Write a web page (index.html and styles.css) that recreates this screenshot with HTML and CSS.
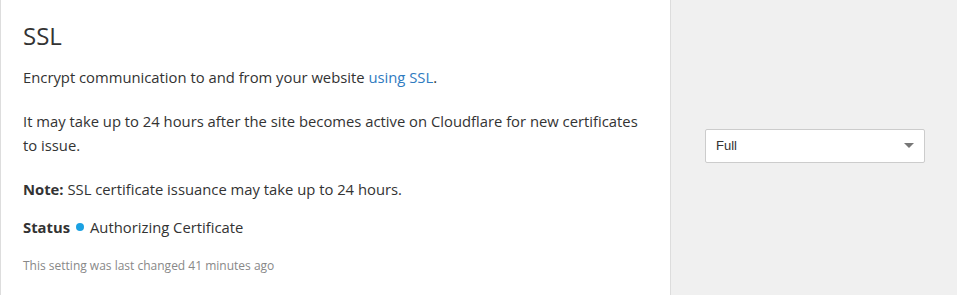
FILE: index.html
```html
<!DOCTYPE html>
<html lang="en">
<head>
    <meta charset="UTF-8">
    <meta name="viewport" content="width=device-width, initial-scale=1.0">
    <title>SSL</title>
    <link rel="stylesheet" href="styles.css">
</head>
<body>
    <div class="card">
        <div class="card-main">
            <h3>SSL</h3>
            <p>Encrypt communication to and from your website <a href="#">using SSL</a>.</p>
            <p>It may take up to 24 hours after the site becomes active on Cloudflare for new certificates to issue.</p>
            <p><strong>Note:</strong> SSL certificate issuance may take up to 24 hours.</p>
            <div class="status">
                <strong>Status</strong>
                <span class="dot"></span>
                <span>Authorizing Certificate</span>
            </div>
            <div class="last-changed">This setting was last changed 41 minutes ago</div>
        </div>
        <div class="card-control">
            <div class="select">
                <span>Full</span>
                <span class="caret"></span>
            </div>
        </div>
    </div>
</body>
</html>
```

FILE: styles.css
```css
body {
    margin: 0;
    font-family: "Open Sans", sans-serif;
    color: #333;
    background: #fff;
}
.card {
    display: flex;
    height: 295px;
    border-left: 1px solid #ddd;
}
.card-main {
    width: 625px;
    padding: 22px 22px 0 22px;
    border-right: 1px solid #ddd;
}
h3 {
    margin: 0 0 14px;
    font-size: 24px;
    font-weight: 400;
    line-height: 1.2;
}
p {
    margin: 0 0 20px;
    font-size: 14.8px;
    line-height: 24px;
}
a {
    color: #2f7bbf;
    text-decoration: none;
}
.status {
    display: flex;
    align-items: center;
    gap: 6px;
    font-size: 14.8px;
    line-height: 24px;
    margin-top: -6px;
}
.dot {
    width: 8px;
    height: 8px;
    border-radius: 50%;
    background: #1ba1e2;
}
.last-changed {
    margin-top: 18px;
    font-size: 12px;
    line-height: 18px;
    color: #888;
}
.card-control {
    flex: 1;
    background: #f0f0f0;
    display: flex;
    align-items: center;
    padding: 0 32px 4px 34px;
}
.select {
    flex: 1;
    height: 32px;
    display: flex;
    align-items: center;
    justify-content: space-between;
    padding: 0 10px;
    background: #fff;
    border: 1px solid #ccc;
    border-radius: 2px;
    font-family: "Liberation Sans", Arial, sans-serif;
    font-size: 13px;
    color: #333;
}
.caret {
    width: 0;
    height: 0;
    border-left: 5px solid transparent;
    border-right: 5px solid transparent;
    border-top: 5px solid #777;
}
```
